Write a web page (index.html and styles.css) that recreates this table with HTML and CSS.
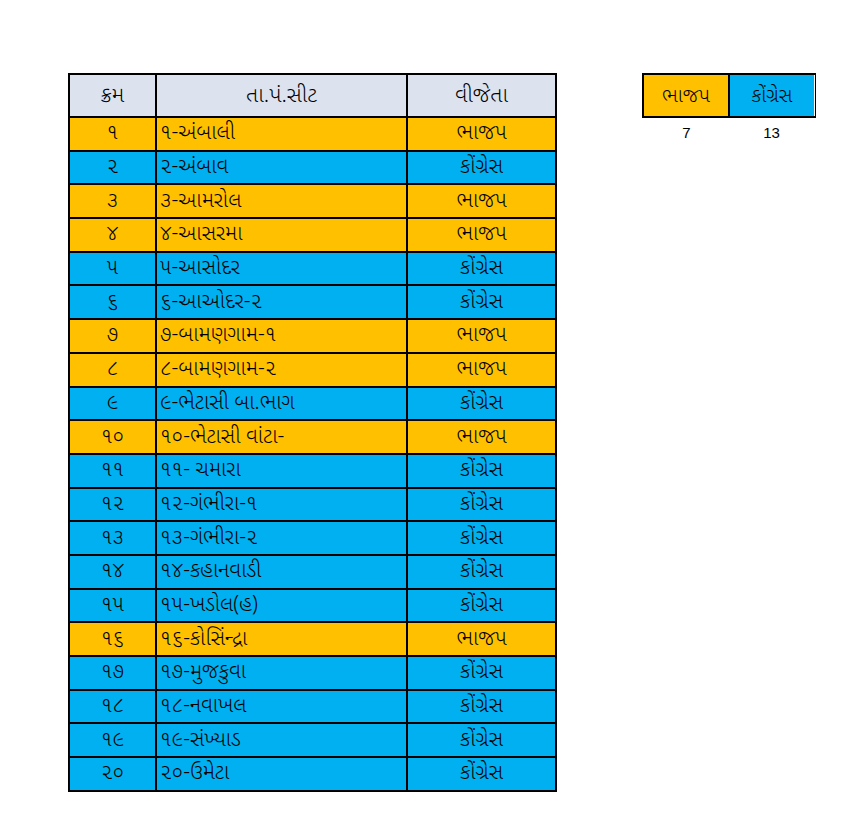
FILE: index.html
```html
<!DOCTYPE html>
<html lang="gu">
<head>
<meta charset="utf-8">
<title>Results</title>
<link rel="stylesheet" href="styles.css">
</head>
<body>
<div class="page">
  <div class="grid main">
    <div class="cell head c">ક્રમ</div>
    <div class="cell head c">તા.પં.સીટ</div>
    <div class="cell head c">વીજેતા</div>

    <div class="cell o c">૧</div><div class="cell o l">૧-અંબાલી</div><div class="cell o c">ભાજપ</div>
    <div class="cell b c">૨</div><div class="cell b l">૨-અંબાવ</div><div class="cell b c">કોંગ્રેસ</div>
    <div class="cell o c">૩</div><div class="cell o l">૩-આમરોલ</div><div class="cell o c">ભાજપ</div>
    <div class="cell o c">૪</div><div class="cell o l">૪-આસરમા</div><div class="cell o c">ભાજપ</div>
    <div class="cell b c">૫</div><div class="cell b l">૫-આસોદર</div><div class="cell b c">કોંગ્રેસ</div>
    <div class="cell b c">૬</div><div class="cell b l">૬-આઓદર-૨</div><div class="cell b c">કોંગ્રેસ</div>
    <div class="cell o c">૭</div><div class="cell o l">૭-બામણગામ-૧</div><div class="cell o c">ભાજપ</div>
    <div class="cell o c">૮</div><div class="cell o l">૮-બામણગામ-૨</div><div class="cell o c">ભાજપ</div>
    <div class="cell b c">૯</div><div class="cell b l">૯-ભેટાસી બા.ભાગ</div><div class="cell b c">કોંગ્રેસ</div>
    <div class="cell o c">૧૦</div><div class="cell o l">૧૦-ભેટાસી વાંટા-</div><div class="cell o c">ભાજપ</div>
    <div class="cell b c">૧૧</div><div class="cell b l">૧૧- ચમારા</div><div class="cell b c">કોંગ્રેસ</div>
    <div class="cell b c">૧૨</div><div class="cell b l">૧૨-ગંભીરા-૧</div><div class="cell b c">કોંગ્રેસ</div>
    <div class="cell b c">૧૩</div><div class="cell b l">૧૩-ગંભીરા-૨</div><div class="cell b c">કોંગ્રેસ</div>
    <div class="cell b c">૧૪</div><div class="cell b l">૧૪-કહાનવાડી</div><div class="cell b c">કોંગ્રેસ</div>
    <div class="cell b c">૧૫</div><div class="cell b l">૧૫-ખડોલ(હ)</div><div class="cell b c">કોંગ્રેસ</div>
    <div class="cell o c">૧૬</div><div class="cell o l">૧૬-કોસિંન્દ્રા</div><div class="cell o c">ભાજપ</div>
    <div class="cell b c">૧૭</div><div class="cell b l">૧૭-મુજકુવા</div><div class="cell b c">કોંગ્રેસ</div>
    <div class="cell b c">૧૮</div><div class="cell b l">૧૮-નવાખલ</div><div class="cell b c">કોંગ્રેસ</div>
    <div class="cell b c">૧૯</div><div class="cell b l">૧૯-સંખ્યાડ</div><div class="cell b c">કોંગ્રેસ</div>
    <div class="cell b c">૨૦</div><div class="cell b l">૨૦-ઉમેટા</div><div class="cell b c">કોંગ્રેસ</div>
  </div>

  <div class="summary">
    <div class="grid side">
      <div class="cell o c big">ભાજપ</div>
      <div class="cell b c big last">કોંગ્રેસ</div>
    </div>
    <div class="counts">
      <div class="count">7</div>
      <div class="count">13</div>
    </div>
  </div>
</div>
</body>
</html>
```

FILE: styles.css
```css
html, body {
  margin: 0;
  padding: 0;
  background: #ffffff;
}
body {
  font-family: "Noto Sans Gujarati", "Noto Sans", "DejaVu Sans", sans-serif;
  font-weight: 300;
  color: #000;
}
.page {
  display: flex;
  align-items: flex-start;
  padding: 73px 0 0 68px;
  gap: 85px;
}
.grid {
  display: grid;
  background: #000;
  gap: 2px;
  padding: 2px;
}
.main {
  grid-template-columns: 85px 249px 147px;
  grid-template-rows: 41px;
  grid-auto-rows: 31.7px;
}
.summary {
  width: 174px;
}
.side {
  grid-template-columns: 84px 85px;
  grid-template-rows: 41px;
  padding-right: 0;
  border-right: 1px solid #000;
}
.side .last {
  border-right: 1px solid #fff;
}
.cell {
  display: flex;
  align-items: center;
  font-size: 21px;
  line-height: 1;
  padding-top: 2px;
  white-space: nowrap;
  overflow: hidden;
}
.c { justify-content: center; }
.l { justify-content: flex-start; padding-left: 3px; }
.head {
  background: #dce3ef;
  font-size: 22px;
}
.big { font-size: 20px; }
.o { background: #ffc000; }
.b { background: #00b0f0; }
.counts {
  display: grid;
  grid-template-columns: 85px 85px;
  padding: 6px 2px 0;
}
.count {
  text-align: center;
  font-family: "Liberation Sans", Arial, sans-serif;
  font-weight: 400;
  font-size: 15px;
}
```
